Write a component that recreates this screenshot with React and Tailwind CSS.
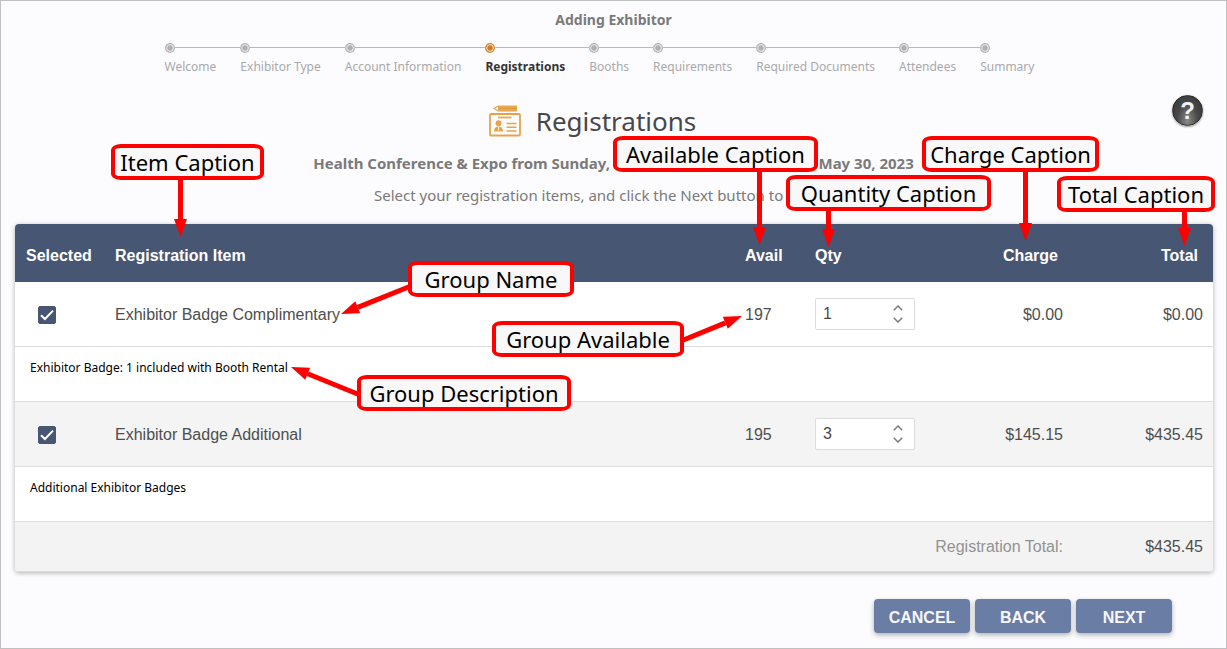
import { useState } from 'react'

const STEPS = [
  'Welcome',
  'Exhibitor Type',
  'Account Information',
  'Registrations',
  'Booths',
  'Requirements',
  'Required Documents',
  'Attendees',
  'Summary',
]

const ITEMS = [
  {
    id: 'complimentary',
    name: 'Exhibitor Badge Complimentary',
    description: 'Exhibitor Badge: 1 included with Booth Rental',
    avail: 197,
    qty: 1,
    charge: '$0.00',
    total: '$0.00',
  },
  {
    id: 'additional',
    name: 'Exhibitor Badge Additional',
    description: 'Additional Exhibitor Badges',
    avail: 195,
    qty: 3,
    charge: '$145.15',
    total: '$435.45',
  },
]

const CALLOUTS = [
  { text: 'Item Caption', place: 'left-[110px] top-[143px] w-[153px]' },
  { text: 'Available Caption', place: 'left-[612px] top-[135px] w-[205px]' },
  { text: 'Charge Caption', place: 'left-[921px] top-[135px] w-[177px]' },
  { text: 'Quantity Caption', place: 'left-[785px] top-[174px] w-[205px]' },
  { text: 'Total Caption', place: 'left-[1056px] top-[175px] w-[158px]' },
  { text: 'Group Name', place: 'left-[407px] top-[260px] w-[166px]' },
  { text: 'Group Available', place: 'left-[491px] top-[320px] w-[192px]' },
  { text: 'Group Description', place: 'left-[356px] top-[374px] w-[214px]' },
]

// [tail x, tail y, tip x, tip y]
const ARROWS = [
  [179.5, 175, 179.5, 236],
  [758.5, 168, 758.5, 244],
  [827.5, 208, 827.5, 246],
  [1024.5, 168, 1024.5, 240],
  [1183.5, 208, 1183.5, 245],
  [410, 285, 340, 313],
  [359, 394, 290, 366],
  [680, 340, 741, 315],
]

function Arrow({ points: [x1, y1, x2, y2] }) {
  const len = Math.hypot(x2 - x1, y2 - y1)
  const ux = (x2 - x1) / len
  const uy = (y2 - y1) / len
  const bx = x2 - ux * 18
  const by = y2 - uy * 18
  const head = [
    [x2, y2],
    [bx - uy * 6.5, by + ux * 6.5],
    [bx + uy * 6.5, by - ux * 6.5],
  ]
  return (
    <g>
      <line x1={x1} y1={y1} x2={bx} y2={by} stroke="#ff0000" strokeWidth="5" />
      <polygon points={head.map((p) => p.join(',')).join(' ')} fill="#ff0000" />
    </g>
  )
}

function Annotations() {
  return (
    <div className="absolute inset-0 overflow-hidden pointer-events-none">
      <svg className="absolute inset-0 w-full h-full">
        {ARROWS.map((points, i) => (
          <Arrow key={i} points={points} />
        ))}
      </svg>
      {CALLOUTS.map((c) => (
        <div
          key={c.text}
          className={`absolute h-9 flex items-center justify-center border-4 border-[#ff0000] rounded-[10px/6px] bg-[#f8f8f8] text-[22px] leading-7 whitespace-nowrap text-black ${c.place}`}
        >
          {c.text}
        </div>
      ))}
    </div>
  )
}

function Stepper({ active }) {
  return (
    <ol className="flex justify-center gap-6 pr-7 mt-[13px] text-xs">
      {STEPS.map((step, i) => {
        const isActive = step === active
        const color = isActive ? '#c8862f' : '#b4b4b6'
        return (
          <li key={step}>
            <div className="flex items-center h-[10px]">
              <svg className="shrink-0" width="10" height="10" viewBox="0 0 10 10">
                <circle cx="5" cy="5" r="4.3" fill={isActive ? '#fbe3bb' : '#ececee'} stroke={color} strokeWidth="1.2" />
                <circle cx="5" cy="5" r="2.7" fill={isActive ? '#cf7a2c' : '#b0b0b2'} />
              </svg>
              {i < STEPS.length - 1 && <span className="h-px grow -mr-6 mb-[2px] bg-[#b8b8ba]" />}
            </div>
            <span
              className={[
                'block mt-1 leading-5 whitespace-nowrap',
                isActive ? 'font-bold text-[#333333]' : 'text-[#a9a9ab]',
              ].join(' ')}
            >
              {step}
            </span>
          </li>
        )
      })}
    </ol>
  )
}

function BadgeIcon() {
  return (
    <svg width="32" height="32" viewBox="0 0 32 32" fill="none" className="shrink-0">
      <path d="M4 3.5 L9 0.6 H28 V6.4 H9 Z" fill="#e9a850" />
      <path d="M6.2 3.5 L9 1.9 V5.1 Z" fill="#fcfcfe" />
      <path d="M9.5 3.5 H27" stroke="#dc9a3f" />
      <rect x="1" y="9" width="30" height="21.5" rx="1" stroke="#e6a34a" strokeWidth="1.8" />
      <path d="M9 12.5 H22.5" stroke="#e9a850" strokeWidth="1.8" />
      <circle cx="9.5" cy="18.2" r="2.9" fill="#e6a34a" />
      <path d="M5 26.5 C5 23 6.6 21.6 9.5 21.6 C12.4 21.6 14 23 14 26.5 Z" fill="#e6a34a" />
      <path d="M9.5 22 V25.5" stroke="#fcf0da" />
      <path d="M17.5 18.5 H27.5 M17.5 22.2 H27.5 M17.5 26 H27.5" stroke="#e6a34a" strokeWidth="1.6" />
    </svg>
  )
}

function HelpButton() {
  return (
    <button
      type="button"
      aria-label="Help"
      className="justify-self-end mr-[23px] mb-5 w-[31px] h-[31px] rounded-full border border-[#2a2a2a] bg-radial-[at_50%_85%] from-[#8a8a8a] via-[#484848] to-[#333333] shadow-[0_1px_2px_rgba(0,0,0,0.4)] font-['Liberation_Sans'] font-bold text-2xl leading-7 text-[#f2f2f2]"
    >
      ?
    </button>
  )
}

function Quantity({ label, value, onChange }) {
  return (
    <div className="flex w-[100px] h-8 bg-white border border-[#dcdcdc] rounded-xs">
      <input
        type="text"
        inputMode="numeric"
        aria-label={label}
        value={value}
        onChange={(e) => onChange(Number(e.target.value) || 0)}
        className="grow min-w-0 pl-[7px] bg-transparent outline-none text-[#4a4a4a]"
      />
      <div className="flex flex-col justify-center w-8 shrink-0 text-[#808080]">
        <button type="button" aria-label="Increase" onClick={() => onChange(value + 1)} className="flex justify-center items-center h-3">
          <svg width="10" height="6" viewBox="0 0 10 6" fill="none" stroke="currentColor" strokeWidth="1.6">
            <path d="M0.8 5.2 L5 1 L9.2 5.2" />
          </svg>
        </button>
        <button type="button" aria-label="Decrease" onClick={() => onChange(Math.max(0, value - 1))} className="flex justify-center items-center h-3">
          <svg width="10" height="6" viewBox="0 0 10 6" fill="none" stroke="currentColor" strokeWidth="1.6">
            <path d="M0.8 0.8 L5 5 L9.2 0.8" />
          </svg>
        </button>
      </div>
    </div>
  )
}

function ItemRows({ item, shaded }) {
  const [checked, setChecked] = useState(true)
  const [qty, setQty] = useState(item.qty)

  return (
    <>
      <tr className={`h-[65px] *:border-b *:border-[#dedede] ${shaded ? 'bg-[#f4f4f4]' : 'bg-white'}`}>
        <td className="pl-[23px] pt-px">
          <label className="grid w-[18px] h-[18px]">
            <input
              type="checkbox"
              aria-label={`Select ${item.name}`}
              checked={checked}
              onChange={(e) => setChecked(e.target.checked)}
              className="col-start-1 row-start-1 appearance-none rounded-xs border border-[#475672] checked:bg-[#475672]"
            />
            {checked && (
              <svg className="col-start-1 row-start-1 pointer-events-none" width="18" height="18" viewBox="0 0 18 18" fill="none">
                <path d="M3 9.3 L6.9 13 L15 4.6" stroke="#ffffff" strokeWidth="2" />
              </svg>
            )}
          </label>
        </td>
        <td className="px-[10px] pt-px">{item.name}</td>
        <td className="px-[10px] pt-px">{item.avail}</td>
        <td className="px-[10px]">
          <Quantity label={`${item.name} quantity`} value={qty} onChange={setQty} />
        </td>
        <td className="px-[10px] pt-px text-right">{item.charge}</td>
        <td className="px-[10px] pt-px text-right">{item.total}</td>
      </tr>
      <tr className="h-[55px] *:border-b *:border-[#dedede] bg-white">
        <td colSpan={6} className="px-[15px] pb-3 font-['Noto_Sans'] text-xs text-black">
          {item.description}
        </td>
      </tr>
    </>
  )
}

function RegistrationTable() {
  return (
    <div className="mt-[17px] ml-[14px] mr-[13px] rounded-sm overflow-hidden border-b border-[#dadada] shadow-[0_1px_5px_rgba(0,0,0,0.3)]">
      <table className="w-full table-fixed border-separate border-spacing-0 font-['Liberation_Sans'] text-base text-[#4e4e4e]">
        <colgroup>
          <col className="w-[90px]" />
          <col />
          <col className="w-[70px]" />
          <col className="w-[120px]" />
          <col className="w-[148px]" />
          <col className="w-[140px]" />
        </colgroup>
        <thead>
          <tr className="h-[58px] bg-[#475672] text-left text-white">
            <th className="pl-[11px] pt-[6px]">Selected</th>
            <th className="px-[10px] pt-[6px]">Registration Item</th>
            <th className="px-[10px] pt-[6px]">Avail</th>
            <th className="px-[10px] pt-[6px]">Qty</th>
            <th className="px-[15px] pt-[6px] text-right">Charge</th>
            <th className="px-[15px] pt-[6px] text-right">Total</th>
          </tr>
        </thead>
        <tbody>
          {ITEMS.map((item, i) => (
            <ItemRows key={item.id} item={item} shaded={i % 2 === 1} />
          ))}
        </tbody>
        <tfoot>
          <tr className="h-[49px] bg-[#f3f3f3]">
            <td colSpan={5} className="px-[10px] text-right text-[#929292]">
              Registration Total:
            </td>
            <td className="px-[10px] text-right">$435.45</td>
          </tr>
        </tfoot>
      </table>
    </div>
  )
}

export default function App() {
  return (
    <main className="relative min-h-screen border border-[#c0c0c0] bg-[#fcfcfe] pt-[9px] font-['Noto_Sans',sans-serif] text-[#7a7a7a]">
      <p className="text-center text-sm leading-5 font-bold">Adding Exhibitor</p>
      <Stepper active="Registrations" />

      <div className="grid grid-cols-[1fr_auto_1fr] items-center h-10 mt-[18px]">
        <span />
        <h1 className="flex items-center gap-[15px] pr-[42px] text-[26px] leading-8 text-[#484848]">
          <BadgeIcon />
          Registrations
        </h1>
        <HelpButton />
      </div>
      <p className="mt-4 text-center text-[15px] leading-6 font-bold">
        Health Conference &amp; Expo from Sunday, May 28, 2023 thru Tuesday, May 30, 2023
      </p>
      <p className="mt-2 text-center text-[15px] leading-6">
        Select your registration items, and click the Next button to continue.
      </p>

      <RegistrationTable />

      <div className="flex justify-end gap-[5px] mt-[27px] mr-[54px]">
        {['CANCEL', 'BACK', 'NEXT'].map((label) => (
          <button
            key={label}
            type="button"
            className="w-24 h-[34px] pt-[3px] rounded-sm bg-[#6a7da4] shadow-[0_2px_5px_rgba(0,0,0,0.3)] font-['Liberation_Sans'] font-bold text-base text-[#f6f7fb]"
          >
            {label}
          </button>
        ))}
      </div>

      <Annotations />
    </main>
  )
}
